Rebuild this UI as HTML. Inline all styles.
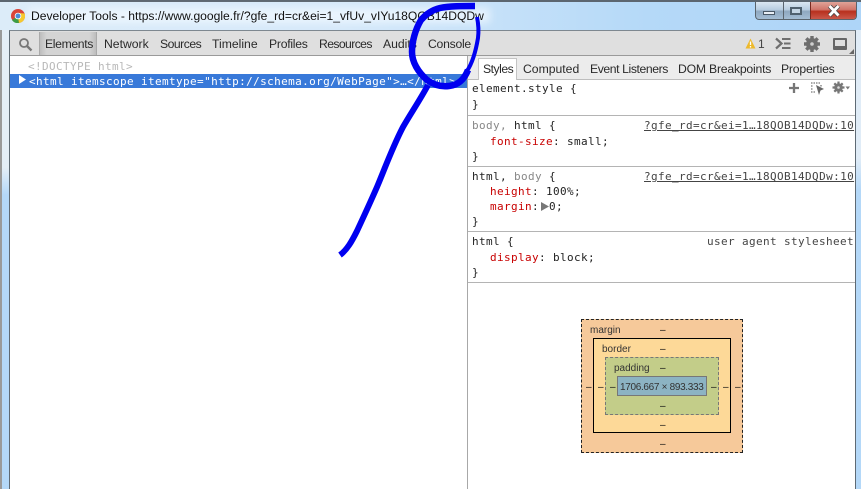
<!DOCTYPE html>
<html><head><meta charset="utf-8">
<style>
html,body{margin:0;padding:0;background:#fff}
#w{position:relative;width:861px;height:489px;overflow:hidden;background:#b9dbf8;font-family:"Liberation Sans",sans-serif;font-size:12px;color:#222}
#w div,#w span.a{position:absolute;white-space:pre}
.t{top:37px;line-height:14px;font-size:12.2px;color:#2a2a2a}
.s{top:62px;line-height:14px;font-size:12.2px;color:#2a2a2a}
.m{font-family:"DejaVu Sans Mono",monospace;font-size:11px;letter-spacing:.38px;line-height:14px;color:#222;left:472px}
.p{color:#c80000}.g{color:#888}
.h{left:468px;width:387px;height:1px;background:#b4b4b4}
.lnk{color:#444;text-decoration:underline;left:644px}
.b{font-size:10px;line-height:12px;color:#333}
.d{color:#111}
</style></head><body>
<div id="w">
<div style="left:0;top:0;width:861px;height:2px;background:#5c6670"></div>
<div style="left:0;top:2px;width:861px;height:28px;background:linear-gradient(90deg,#dcecf9 0,#d6e9fa 40%,#b5d9f8 75%,#aed5f8 100%)"></div>
<div style="left:28px;top:8px;width:462px;height:15px;background:rgba(240,248,255,.75);filter:blur(4px)"></div>
<div style="left:0;top:30px;width:2px;height:459px;background:#9a9a9a"></div>
<div style="left:2px;top:30px;width:7px;height:459px;background:linear-gradient(180deg,#e4eef7 0,#e4eef7 30%,#b4d8f8 36%,#b4d8f8 100%)"></div>
<div style="left:9px;top:30px;width:847px;height:459px;background:#fff;border-left:1px solid #5e6a74;border-right:1px solid #5e6a74;box-sizing:border-box;border-top:1px solid #7e8890"></div>
<div style="left:856px;top:30px;width:5px;height:459px;background:linear-gradient(180deg,#e0ecf7 0,#e0ecf7 28%,#b4d8f8 35%,#b4d8f8 100%)"></div>

<svg style="position:absolute;left:11px;top:9px" width="14" height="14" viewBox="0 0 14 14"><circle cx="7" cy="7" r="7" fill="#d9443a"/><path d="M7 7L1 11A7 7 0 0 0 8 14Z" fill="#3d9c45"/><path d="M7 7L8 14A7 7 0 0 0 13.600 4.500L7 4Z" fill="#f5c92f"/><circle cx="7" cy="7" r="3.300" fill="#fff"/><circle cx="7" cy="7" r="2.500" fill="#4a8ad8"/></svg>
<div style="left:31px;top:9px;line-height:15px;font-size:12.1px;color:#111">Developer Tools - https://www.google.fr/?gfe_rd=cr&amp;ei=1_vfUv_vIYu18QOB14DQDw</div>

<div style="left:755px;top:2px;width:102px;height:18px;border:1px solid #59636c;border-top:none;border-radius:0 0 4px 4px;box-sizing:border-box;overflow:hidden;background:linear-gradient(180deg,#dbe7f2 0,#b8cde0 45%,#8fa8c0 55%,#a4bdd4 100%)">
<div style="left:27px;top:0;width:1px;height:17px;background:#5a646e"></div>
<div style="left:54px;top:0;width:46px;height:17px;border-left:1px solid #7a2a20;background:linear-gradient(180deg,#e0a398 0,#d1756a 45%,#b8301e 55%,#c9584a 100%)"></div>
<div style="left:7px;top:9px;width:10px;height:2px;background:#e8eef5;border:1px solid #4a5866"></div>
<div style="left:34px;top:5px;width:8px;height:4px;border:2px solid #50616f;background:#c4d5e4"></div>
<svg style="position:absolute;left:71px;top:3px" width="14" height="12" viewBox="0 0 14 12"><path d="M2.500 1L11.500 10.500M11.500 1L2.500 10.500" stroke="#4a4a4a" stroke-width="4.500"/><path d="M2.500 1L11.500 10.500M11.500 1L2.500 10.500" stroke="#fff" stroke-width="2.800"/></svg>
</div>

<div style="left:10px;top:31px;width:845px;height:24px;background:#dfdfdf;border-bottom:1px solid #9a9a9a"></div>
<svg style="position:absolute;left:18px;top:37px" width="15" height="15" viewBox="0 0 15 15"><circle cx="6" cy="6" r="4" fill="none" stroke="#777" stroke-width="1.800"/><path d="M9 9L13.500 13.500" stroke="#777" stroke-width="2.300"/></svg>
<div style="left:39px;top:32px;width:58px;height:23px;background:linear-gradient(90deg,#bdbdbd,#d4d4d4 12%,#d4d4d4 88%,#bdbdbd);border-left:1px solid #aaa;border-right:1px solid #aaa;box-sizing:border-box"></div>
<div class="t" style="left:45px;letter-spacing:-.35px">Elements</div>
<div class="t" style="left:104px">Network</div>
<div class="t" style="left:160px;letter-spacing:-.5px">Sources</div>
<div class="t" style="left:212px">Timeline</div>
<div class="t" style="left:269px;letter-spacing:-.25px">Profiles</div>
<div class="t" style="left:319px;letter-spacing:-.6px">Resources</div>
<div class="t" style="left:383px">Audits</div>
<div class="t" style="left:428px;letter-spacing:-.25px">Console</div>

<svg style="position:absolute;left:745px;top:38px" width="11" height="11" viewBox="0 0 11 11"><path d="M5.500 .5L10.500 10.500H.5Z" fill="#edb92c"/><path d="M5.500 3.500V7M5.500 8V9.500" stroke="#fff" stroke-width="1.300"/></svg>
<div style="left:758px;top:37px;line-height:14px;font-size:12px;color:#444">1</div>
<svg style="position:absolute;left:775px;top:37px" width="16" height="13" viewBox="0 0 16 13"><path d="M1 1.500L6.500 6.500L1 11.500" fill="none" stroke="#6e6e6e" stroke-width="2.200"/><path d="M7 2H15.500M9 6.500H15.500M7 11H15.500" stroke="#6e6e6e" stroke-width="2"/></svg>
<svg style="position:absolute;left:804px;top:36px" width="16" height="16" viewBox="0 0 16 16"><circle cx="8" cy="8" r="6" fill="#6e6e6e"/><g stroke="#6e6e6e" stroke-width="3.400"><path d="M8 0V16M0 8H16M2.300 2.300L13.700 13.700M13.700 2.300L2.300 13.700"/></g><circle cx="8" cy="8" r="1.800" fill="#cfcfcf"/></svg>
<div style="left:833px;top:38px;width:10px;height:6px;border:2px solid #666;border-bottom:4px solid #666;background:#dfdfdf;border-radius:1px"></div>
<svg style="position:absolute;left:849px;top:49px" width="5" height="5"><path d="M5 0V5H0Z" fill="#666"/></svg>

<div style="left:468px;top:56px;width:387px;height:23px;background:#ececec;border-bottom:1px solid #bdbdbd"></div>
<div style="left:467px;top:56px;width:1px;height:433px;background:#a8a8a8"></div>
<div style="left:478px;top:58px;width:39px;height:22px;background:#fff;border:1px solid #c4c4c4;border-bottom:none;box-sizing:border-box"></div>
<div class="s" style="left:483px;letter-spacing:-.5px">Styles</div>
<div class="s" style="left:523px">Computed</div>
<div class="s" style="left:590px;letter-spacing:-.4px">Event Listeners</div>
<div class="s" style="left:678px;letter-spacing:-.2px">DOM Breakpoints</div>
<div class="s" style="left:781px;letter-spacing:-.2px">Properties</div>

<div style="left:10px;top:74px;width:457px;height:14px;background:#3879d9"></div>
<div class="m" style="left:28px;top:60px;color:#b8b8b8">&lt;!DOCTYPE html&gt;</div>
<svg style="position:absolute;left:19px;top:75px" width="8" height="10"><path d="M0 0L7 4.500L0 9Z" fill="#fff"/></svg>
<div class="m" style="left:29px;top:75px;color:#fff">&lt;html itemscope itemtype="http://schema.org/WebPage"&gt;…&lt;/html&gt;</div>

<div class="m" style="top:82px">element.style {</div>
<div class="m" style="top:98px">}</div>
<svg style="position:absolute;left:788px;top:82px" width="12" height="12"><path d="M6 1V11M1 6H11" stroke="#777" stroke-width="2.300"/></svg>
<svg style="position:absolute;left:810px;top:82px" width="15" height="13" viewBox="0 0 15 13"><path d="M1 1H10M1 4H3M1 7H3M1 10H6M11 3V5" stroke="#777" stroke-width="1.300" stroke-dasharray="1.500 1"/><path d="M6 3L14 7L10.500 8.500L9 13Z" fill="#666"/></svg>
<svg style="position:absolute;left:832px;top:81px" width="18" height="13" viewBox="0 0 18 13"><circle cx="6.500" cy="6.500" r="4.300" fill="#777"/><path d="M6.500 .5V12.500M.5 6.500H12.500M2.300 2.300L10.700 10.700M10.700 2.300L2.300 10.700" stroke="#777" stroke-width="2.200"/><circle cx="6.500" cy="6.500" r="1.300" fill="#ddd"/><path d="M13.500 5.500H18L15.750 8.500Z" fill="#777"/></svg>
<div class="h" style="top:115px"></div>

<div class="m" style="top:119px"><span class="g">body,</span> html {</div>
<div class="m lnk" style="top:119px">?gfe_rd=cr&amp;ei=1…18QOB14DQDw:10</div>
<div class="m" style="top:135px;left:490px"><span class="p">font-size</span>: small;</div>
<div class="m" style="top:150px">}</div>
<div class="h" style="top:166px"></div>

<div class="m" style="top:170px">html, <span class="g">body</span> {</div>
<div class="m lnk" style="top:170px">?gfe_rd=cr&amp;ei=1…18QOB14DQDw:10</div>
<div class="m" style="top:185px;left:490px"><span class="p">height</span>: 100%;</div>
<div class="m" style="top:200px;left:490px"><span class="p">margin</span>:</div>
<svg style="position:absolute;left:541px;top:202px" width="9" height="10"><path d="M0 0L8 4.500L0 9Z" fill="#777"/></svg>
<div class="m" style="top:200px;left:549px">0;</div>
<div class="m" style="top:215px">}</div>
<div class="h" style="top:231px"></div>

<div class="m" style="top:235px">html {</div>
<div class="m" style="top:235px;left:707px;color:#444">user agent stylesheet</div>
<div class="m" style="top:251px;left:490px"><span class="p">display</span>: block;</div>
<div class="m" style="top:266px">}</div>
<div class="h" style="top:282px"></div>

<div style="left:581px;top:319px;width:162px;height:134px;box-sizing:border-box;background:#f6c99a;border:1px dashed #222"></div>
<div style="left:593px;top:338px;width:138px;height:95px;box-sizing:border-box;background:#fdd998;border:1px solid #000"></div>
<div style="left:605px;top:357px;width:114px;height:58px;box-sizing:border-box;background:#c3cd89;border:1px dashed #777"></div>
<div style="left:617px;top:376px;width:90px;height:20px;box-sizing:border-box;background:#8cb3c3;border:1px solid #777"></div>
<div class="b" style="left:590px;top:325px">margin</div>
<div class="b" style="left:602px;top:344px">border</div>
<div class="b" style="left:614px;top:363px">padding</div>
<div class="b" style="left:620px;top:382px;letter-spacing:-.32px">1706.667 × 893.333</div>
<div class="b d" style="left:660px;top:325px">‒</div>
<div class="b d" style="left:660px;top:344px">‒</div>
<div class="b d" style="left:660px;top:363px">‒</div>
<div class="b d" style="left:660px;top:401px">‒</div>
<div class="b d" style="left:660px;top:420px">‒</div>
<div class="b d" style="left:660px;top:439px">‒</div>
<div class="b d" style="left:586px;top:382px">‒</div>
<div class="b d" style="left:598px;top:382px">‒</div>
<div class="b d" style="left:610px;top:382px">‒</div>
<div class="b d" style="left:711px;top:382px">‒</div>
<div class="b d" style="left:723px;top:382px">‒</div>
<div class="b d" style="left:735px;top:382px">‒</div>

<svg style="position:absolute;left:0;top:0" width="861" height="489" viewBox="0 0 861 489">
<path d="M475 6C462 6 450 6 440 8C432 10 426 14 421 20C415 30 412 42 412 52C412 62 418 72 427 80C434 85 442 87 449 86C458 85 464 80 468 70" fill="none" stroke="#0000f0" stroke-width="6.500"/>
<path d="M467 71C473 62 476 50 478 38C479 30 478 22 477 17" fill="none" stroke="#0000f0" stroke-width="4"/>
<path d="M428 85C420 100 411 113 403 127C393 146 385 168 377 187C370 203 364 216 357 231C352 241 347 250 340 255" fill="none" stroke="#0000f0" stroke-width="6"/>
</svg>
</div>
</body></html>
